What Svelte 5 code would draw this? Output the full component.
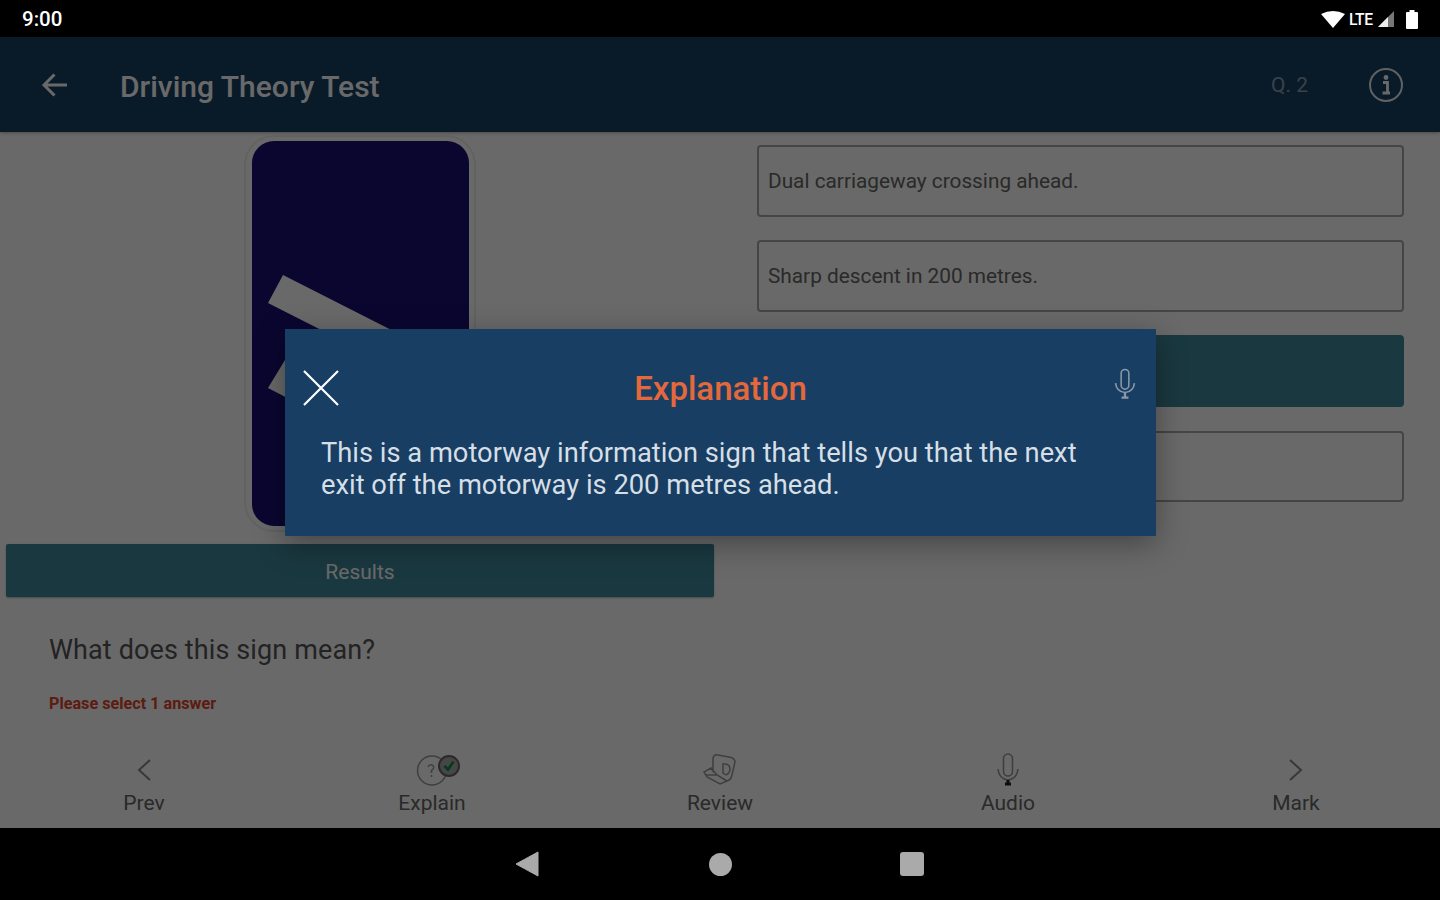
<script lang="ts">
	const options = [
		{ text: 'Dual carriageway crossing ahead.', selected: false },
		{ text: 'Sharp descent in 200 metres.', selected: false },
		{ text: '', selected: true },
		{ text: '', selected: false }
	];
</script>

<div class="device">
	<header class="status">
		<span class="time">9:00</span>
		<div class="status-icons">
			<svg class="wifi" width="24" height="18" viewBox="0 0 24 18"><path d="M0 4 Q12 -2 24 4 L12 18 Z" fill="#fff" /></svg>
			<span class="lte">LTE</span>
			<svg class="signal" width="18" height="18" viewBox="0 0 18 18">
				<path d="M17 1 V17 H1 Z" fill="#777" />
				<path d="M11 7 V17 H1 Z" fill="#eee" />
			</svg>
			<svg class="battery" width="12" height="19" viewBox="0 0 12 19">
				<path d="M3.5 0 H8.5 V2 H11 Q12 2 12 3 V18 Q12 19 11 19 H1 Q0 19 0 18 V3 Q0 2 1 2 H3.5 Z" fill="#fff" />
			</svg>
		</div>
	</header>

	<div class="screen">
		<div class="appbar">
			<svg class="back" width="28" height="28" viewBox="0 0 28 28" fill="none" stroke="#fff" stroke-width="3">
				<path d="M26 14 H3 M13.5 3.5 L3 14 L13.5 24.5" />
			</svg>
			<h1>Driving Theory Test</h1>
			<span class="counter">Q. 2</span>
			<svg class="info" width="36" height="36" viewBox="0 0 36 36" fill="none" stroke="#fff">
				<circle cx="18" cy="18" r="16" stroke-width="2" opacity="0.9" />
				<circle cx="18" cy="10.5" r="2.4" fill="#fff" stroke="none" />
				<path d="M15 15.5 H19.5 V25 M14.5 26 H22" stroke-width="2.8" />
			</svg>
		</div>

		<main class="content">
			<section class="left">
				<div class="sign-card">
					<svg class="sign" width="217" height="385" viewBox="0 0 217 385">
						<rect width="217" height="385" rx="22" fill="#190f75" />
						<path d="M31 134 L16 162 L150 230 L165 202 Z" fill="#fff" />
						<path d="M33 219 L16 247 L80 280 L97 252 Z" fill="#fff" />
					</svg>
				</div>
				<button class="results" type="button"><span>Results</span></button>
				<p class="question">What does this sign mean?</p>
				<p class="hint">Please select 1 answer</p>
			</section>

			<section class="right">
				{#each options as option}
					<div class="option" class:selected={option.selected}>{option.text}</div>
				{/each}
			</section>
		</main>

		<nav class="tabs">
			<div class="tab">
				<svg width="36" height="36" viewBox="0 0 36 36" fill="none" stroke="#888" stroke-width="2">
					<path d="M24 9 L13 19 L24 29" />
				</svg>
				<span>Prev</span>
			</div>
			<div class="tab">
				<svg width="68" height="36" viewBox="0 0 68 36" fill="none" stroke="#999" stroke-width="1.5">
					<circle cx="34" cy="19.5" r="14.5" />
					<path d="M30 16 Q32 12.5 35 14.5 Q37 17 33.5 19.5 V22 M33.5 24 V26" />
					<circle cx="51" cy="15" r="10" fill="#aaa" stroke="#666" stroke-width="2" />
					<path d="M46.5 15 L50 18.5 L55.5 10.5" stroke="#0e8a3a" stroke-width="2.6" />
				</svg>
				<span>Explain</span>
			</div>
			<div class="tab">
				<svg width="36" height="36" viewBox="0 0 36 36" fill="none" stroke="#999" stroke-width="1.5">
					<path d="M11 7 Q12 3 16 4 L27 6 Q33 7 33 11 L30 24 Q29 29 25 30 L18 33 L5 26 L2 21 L9 17 L11 20 Z" />
					<path d="M9 17 L15 24 L25 30 M15 24 L4 24 M22 13 Q28 13 28 18 Q28 22 24 24 M21 12 L21 22 L24 24" />
				</svg>
				<span>Review</span>
			</div>
			<div class="tab">
				<svg width="36" height="36" viewBox="0 0 36 36" fill="none" stroke="#999" stroke-width="1.6">
					<rect x="13.5" y="3" width="9" height="22" rx="4.5" />
					<path d="M8 18 Q9 28 18 29 Q27 28 28 18" />
					<path d="M15 33 H21 M18 29 V33" stroke="#222" stroke-width="3" />
				</svg>
				<span>Audio</span>
			</div>
			<div class="tab">
				<svg width="36" height="36" viewBox="0 0 36 36" fill="none" stroke="#888" stroke-width="2">
					<path d="M12 9 L23 19 L12 29" />
				</svg>
				<span>Mark</span>
			</div>
		</nav>

		<div class="scrim">
			<div class="dialog">
				<div class="dialog-head">
					<svg class="close" width="36" height="36" viewBox="0 0 36 36" stroke="#fff" stroke-width="2.2">
						<path d="M1 1 L35 35 M35 1 L1 35" />
					</svg>
					<h2>Explanation</h2>
					<svg class="mic" width="24" height="34" viewBox="0 0 28 36" fill="none" stroke="#8b99a8" stroke-width="1.8">
						<rect x="9.5" y="1" width="9" height="23" rx="4.5" />
						<path d="M3 17 Q4 27 14 28 Q24 27 25 17" />
						<path d="M10 34 H18 M14 28 V34" stroke-width="2.6" />
					</svg>
				</div>
				<p>This is a motorway information sign that tells you that the next exit off the motorway is 200 metres ahead.</p>
			</div>
		</div>
	</div>

	<footer class="sysnav">
		<svg width="24" height="26" viewBox="0 0 24 26"><path d="M23 1 V25 L1 13 Z" fill="#aaa" stroke="#aaa" stroke-linejoin="round" /></svg>
		<span class="dot"></span>
		<span class="square"></span>
	</footer>
</div>

<style>
	:global(body) {
		background: #000;
	}

	.device {
		display: flex;
		flex-direction: column;
		height: 900px;
		width: 1440px;
		overflow: hidden;
		font-family: Roboto, 'Liberation Sans', sans-serif;
	}

	.status {
		align-items: center;
		background: #000;
		color: #fff;
		display: flex;
		flex: 0 0 37px;
		justify-content: space-between;
		padding: 1px 22px 0;
		box-sizing: border-box;
	}

	.time {
		font-size: 20.5px;
		font-weight: 500;
	}

	.status-icons {
		align-items: center;
		display: flex;
	}

	.wifi {
		margin-right: 3px;
	}

	.lte {
		font-size: 17px;
		font-weight: 500;
		letter-spacing: -0.5px;
		margin-right: 3px;
		transform: scaleX(0.92);
	}

	.signal {
		margin-right: 11px;
	}

	.screen {
		background: #fff;
		display: flex;
		flex: 1;
		flex-direction: column;
		min-height: 0;
		position: relative;
	}

	.appbar {
		align-items: center;
		background: #183f63;
		box-shadow: 0 1px 3px rgba(0, 0, 0, 0.3);
		color: #fff;
		display: flex;
		flex: 0 0 95px;
		padding: 0 36px 0 41px;
	}

	.back {
		margin-right: 51px;
	}

	.appbar h1 {
		flex: 1;
		font-size: 30px;
		font-weight: 500;
		margin: 3px 0 0;
	}

	.counter {
		color: rgba(255, 255, 255, 0.5);
		font-size: 21px;
		margin: 1px 60px 0 0;
	}

	.content {
		display: grid;
		flex: 1;
		grid-template-columns: 720px 720px;
		min-height: 0;
	}

	.left {
		display: flex;
		flex-direction: column;
		padding-top: 3px;
	}

	.sign-card {
		align-self: center;
		background: #fff;
		border: 2px solid #eee;
		border-radius: 30px;
		box-sizing: border-box;
		height: 397px;
		padding: 4px 0 0 6px;
		width: 232px;
	}

	.sign {
		display: block;
	}

	.results {
		background: #40889c;
		border: 0;
		border-radius: 2px;
		box-shadow: 0 1px 2px rgba(0, 0, 0, 0.3);
		color: #fff;
		font-family: inherit;
		font-size: 21px;
		height: 53px;
		margin: 12px 6px 0;
		padding: 2px 0 0;
		width: 708px;
	}

	.question {
		color: #555;
		font-size: 27px;
		letter-spacing: 0.12px;
		margin: 37px 0 0 49px;
	}

	.hint {
		color: #e0442c;
		font-size: 16.2px;
		font-weight: 700;
		margin: 28px 0 0 49px;
	}

	.right {
		display: flex;
		flex-direction: column;
		gap: 23.7px;
		padding: 13px 36px 0 37px;
	}

	.option {
		align-items: center;
		border: 2px solid #a8a8a8;
		border-radius: 4px;
		box-sizing: border-box;
		color: #666;
		display: flex;
		font-size: 20.8px;
		height: 71.5px;
		padding-left: 9px;
	}

	.option.selected {
		background: #40889c;
		border-color: #40889c;
	}

	.tabs {
		display: grid;
		flex: 0 0 80px;
		grid-template-columns: repeat(5, 1fr);
	}

	.tab {
		align-items: center;
		color: #666;
		display: flex;
		flex-direction: column;
		font-size: 21px;
		padding-top: 3px;
	}

	.tab svg {
		display: block;
	}

	.tab span {
		margin-top: 4px;
		line-height: 24px;
	}

	.scrim {
		align-items: center;
		background: rgba(0, 0, 0, 0.59);
		display: flex;
		inset: 0;
		justify-content: center;
		position: absolute;
	}

	.dialog {
		background: #183f63;
		box-shadow: 0 8px 28px rgba(0, 0, 0, 0.35);
		box-sizing: border-box;
		color: #d6dee6;
		height: 207px;
		margin-left: 1px;
		padding: 36px 70px 0 36px;
		width: 871px;
	}

	.dialog-head {
		align-items: center;
		display: flex;
		height: 46px;
		justify-content: center;
		margin-right: -34px;
		position: relative;
	}

	.dialog-head h2 {
		color: #e4683c;
		font-size: 33px;
		font-weight: 500;
		margin: 0;
	}

	.close {
		left: -18px;
		position: absolute;
		top: 5px;
	}

	.mic {
		position: absolute;
		right: -17px;
		top: 2px;
	}

	.dialog p {
		font-size: 27.3px;
		line-height: 32px;
		margin: 26px 0 0;
	}

	.sysnav {
		align-items: center;
		background: #000;
		display: flex;
		flex: 0 0 72px;
		justify-content: center;
		padding-right: 2px;
		position: relative;
	}

	.sysnav svg {
		margin-right: 170px;
	}

	.dot {
		background: #aaa;
		border-radius: 50%;
		height: 23px;
		margin-right: 168px;
		width: 23px;
	}

	.square {
		background: #aaa;
		border-radius: 3px;
		height: 24px;
		width: 24px;
	}
</style>
